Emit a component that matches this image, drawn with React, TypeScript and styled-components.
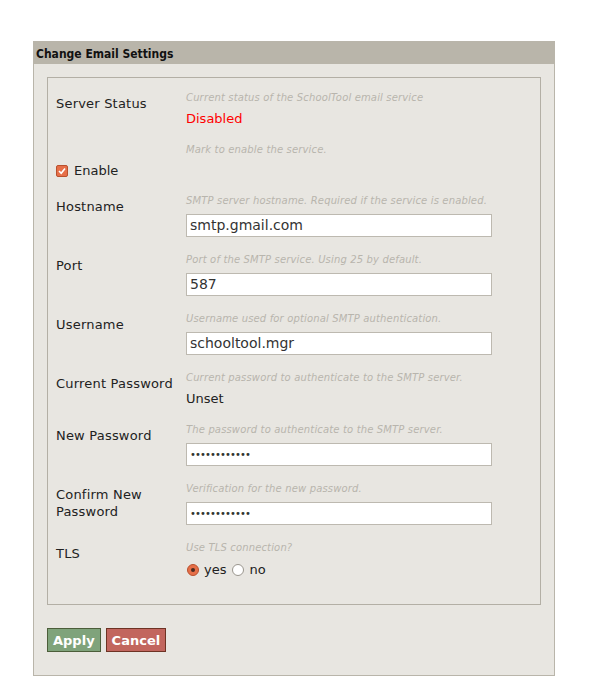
import * as React from 'react'
import styled, {createGlobalStyle} from 'styled-components'

const GlobalStyle = createGlobalStyle`
  body {
    margin: 0;
    background: #ffffff;
    font-family: "DejaVu Sans", Verdana, sans-serif;
  }
`

const Page = styled.div`
  padding: 41px 0 0 33px;
  height: 700px;
  box-sizing: border-box;
`

const Panel = styled.div`
  width: 522px;
  box-sizing: border-box;
  background: #e8e6e1;
  border: 1px solid #b9b5aa;
  padding-bottom: 23px;
`

const PanelHeader = styled.div`
  height: 23px;
  background: #b9b5aa;
  margin: -1px -1px 0 -1px;
  padding-left: 3px;
  font-family: "DejaVu Sans Condensed", "DejaVu Sans", sans-serif;
  font-weight: bold;
  font-size: 12px;
  line-height: 26px;
  color: #111;
`

const Fieldset = styled.div`
  margin: 13px 13px 0 13px;
  border: 1px solid #b3afa5;
  padding: 13px 0 11px 8px;
`

const Row = styled.div`
  display: flex;
  margin-bottom: 16px;
`

const StackRow = styled(Row)`
  flex-direction: column;
`

const Label = styled.div`
  width: 130px;
  flex: none;
  padding-top: 4px;
  font-size: 13px;
  line-height: 17px;
  color: #222;
  letter-spacing: 0.2px;
`

const Field = styled.div<{ $indent?: boolean }>`
  display: flex;
  flex-direction: column;
  margin-left: ${({$indent}) => $indent ? '130px' : '0'};
`

const Hint = styled.div`
  font-size: 10px;
  letter-spacing: 0.15px;
  line-height: 14px;
  font-style: italic;
  color: #b8b5ad;
  margin-bottom: 6px;
  white-space: nowrap;
`

const Value = styled.div<{ $color?: string }>`
  font-size: 13px;
  line-height: 16px;
  color: ${({$color}) => $color || '#222'};
`

const Input = styled.div<{ $password?: boolean }>`
  width: 306px;
  height: 23px;
  box-sizing: border-box;
  background: #ffffff;
  border: 1px solid #bdb9b0;
  padding-left: 3px;
  font-size: ${({$password}) => $password ? '10px' : '14px'};
  letter-spacing: ${({$password}) => $password ? '-0.9px' : '0'};
  line-height: 21px;
  color: #333;
`

const CheckRow = styled.div`
  display: flex;
  align-items: center;
  font-size: 13px;
  color: #222;
  gap: 6px;
`

const CheckBox = styled.span`
  width: 12px;
  height: 12px;
  border-radius: 2px;
  background: #e66f48;
  border: 1px solid #b9502e;
  box-sizing: border-box;
  display: inline-flex;
  align-items: center;
  justify-content: center;
`

const RadioRow = styled.div`
  display: flex;
  align-items: center;
  font-size: 13px;
  color: #222;
  margin-top: 1px;
`

const Radio = styled.span<{ $checked?: boolean }>`
  width: 12px;
  height: 12px;
  border-radius: 50%;
  box-sizing: border-box;
  margin: 0 5px 0 1px;
  background: ${({$checked}) => $checked ? '#e66f48' : '#ffffff'};
  border: 1px solid ${({$checked}) => $checked ? '#b9502e' : '#9a968e'};
  display: inline-flex;
  align-items: center;
  justify-content: center;

  &::after {
    content: '';
    display: ${({$checked}) => $checked ? 'block' : 'none'};
    width: 4px;
    height: 4px;
    border-radius: 50%;
    background: #4a2a20;
  }
`

const RadioText = styled.span`
  margin-right: 5px;
`

const Buttons = styled.div`
  display: flex;
  gap: 5px;
  margin: 23px 0 0 13px;
`

const Button = styled.button<{ $bg: string; $border: string }>`
  height: 24px;
  padding: 0 5px;
  font-family: "DejaVu Sans", sans-serif;
  font-weight: bold;
  font-size: 13px;
  color: #ffffff;
  background: ${({$bg}) => $bg};
  border: 1px solid ${({$border}) => $border};
  border-radius: 0;
  cursor: pointer;
`

const textFields = [
  {key: 'host', label: 'Hostname', hint: 'SMTP server hostname. Required if the service is enabled.', value: 'smtp.gmail.com'},
  {key: 'port', label: 'Port', hint: 'Port of the SMTP service. Using 25 by default.', value: '587'},
  {key: 'user', label: 'Username', hint: 'Username used for optional SMTP authentication.', value: 'schooltool.mgr'},
]

const dots = '\u2022'.repeat(12)

const App = () => {
  return (
    <Page>
      <GlobalStyle/>
      <Panel>
        <PanelHeader>Change Email Settings</PanelHeader>
        <Fieldset>
          <Row>
            <Label>Server Status</Label>
            <Field>
              <Hint>Current status of the SchoolTool email service</Hint>
              <Value $color="#ff0000">Disabled</Value>
            </Field>
          </Row>
          <StackRow>
            <Field $indent>
              <Hint>Mark to enable the service.</Hint>
            </Field>
            <CheckRow>
              <CheckBox>
                <svg width="8" height="8" viewBox="0 0 8 8">
                  <path d="M1 4 L3.2 6.2 L7 1.5" stroke="#fff" strokeWidth="1.6" fill="none"/>
                </svg>
              </CheckBox>
              Enable
            </CheckRow>
          </StackRow>
          {textFields.map(v => {
            return (
              <Row key={v.key}>
                <Label>{v.label}</Label>
                <Field>
                  <Hint>{v.hint}</Hint>
                  <Input>{v.value}</Input>
                </Field>
              </Row>
            )
          })}
          <Row>
            <Label>Current Password</Label>
            <Field>
              <Hint>Current password to authenticate to the SMTP server.</Hint>
              <Value>Unset</Value>
            </Field>
          </Row>
          <Row>
            <Label>New Password</Label>
            <Field>
              <Hint>The password to authenticate to the SMTP server.</Hint>
              <Input $password>{dots}</Input>
            </Field>
          </Row>
          <Row>
            <Label>Confirm New<br/>Password</Label>
            <Field>
              <Hint>Verification for the new password.</Hint>
              <Input $password>{dots}</Input>
            </Field>
          </Row>
          <Row>
            <Label>TLS</Label>
            <Field>
              <Hint>Use TLS connection?</Hint>
              <RadioRow>
                <Radio $checked/>
                <RadioText>yes</RadioText>
                <Radio/>
                <RadioText>no</RadioText>
              </RadioRow>
            </Field>
          </Row>
        </Fieldset>
        <Buttons>
          <Button $bg="#7fa37b" $border="#4c5e3a">Apply</Button>
          <Button $bg="#c2665e" $border="#6e3324">Cancel</Button>
        </Buttons>
      </Panel>
    </Page>
  )
}

export default App
